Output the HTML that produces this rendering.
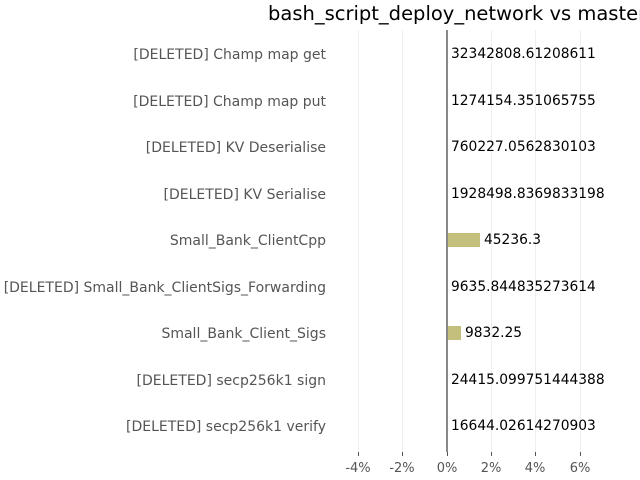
<!DOCTYPE html>
<html><head><style>
body{margin:0;width:640px;height:480px;background:#fff;overflow:hidden;position:relative;font-family:"DejaVu Sans","Liberation Sans",sans-serif}
.t{position:absolute;white-space:nowrap}
.l{right:314px;color:#555;font-size:14px;line-height:16px}
.v{color:#000;font-size:13.8px;line-height:16px}
.g{position:absolute;top:30px;height:422px;width:1px;background:#efefef}
.k{position:absolute;top:452px;height:4px;width:1px;background:#555}
.x{position:absolute;top:461px;color:#555;font-size:13px;width:40px;text-align:center}
.b{position:absolute;left:447px;height:14px;background:#c4bf7d}
</style></head><body>
<div class="t" style="left:268px;top:2px;font-size:19.5px;color:#000">bash_script_deploy_network vs master</div>
<div class="g" style="left:358px"></div><div class="g" style="left:402px"></div><div class="g" style="left:491px"></div><div class="g" style="left:535px"></div><div class="g" style="left:580px"></div>
<div class="k" style="left:358px"></div><div class="k" style="left:402px"></div><div class="k" style="left:447px"></div><div class="k" style="left:491px"></div><div class="k" style="left:535px"></div><div class="k" style="left:580px"></div>
<div class="x" style="left:338px">-4%</div><div class="x" style="left:382px">-2%</div><div class="x" style="left:427px">0%</div><div class="x" style="left:471px">2%</div><div class="x" style="left:515px">4%</div><div class="x" style="left:560px">6%</div>
<div class="b" style="top:233px;width:33px"></div>
<div class="b" style="top:326px;width:14px"></div>
<div style="position:absolute;left:446px;top:30px;width:2px;height:422px;background:#888"></div>
<div class="t l" style="top:47px">[DELETED] Champ map get</div>
<div class="t l" style="top:94px">[DELETED] Champ map put</div>
<div class="t l" style="top:140px">[DELETED] KV Deserialise</div>
<div class="t l" style="top:187px">[DELETED] KV Serialise</div>
<div class="t l" style="top:233px">Small_Bank_ClientCpp</div>
<div class="t l" style="top:280px">[DELETED] Small_Bank_ClientSigs_Forwarding</div>
<div class="t l" style="top:326px">Small_Bank_Client_Sigs</div>
<div class="t l" style="top:373px">[DELETED] secp256k1 sign</div>
<div class="t l" style="top:419px">[DELETED] secp256k1 verify</div>
<div class="t v" style="left:451px;top:46px">32342808.61208611</div>
<div class="t v" style="left:451px;top:93px">1274154.351065755</div>
<div class="t v" style="left:451px;top:139px">760227.0562830103</div>
<div class="t v" style="left:451px;top:186px">1928498.8369833198</div>
<div class="t v" style="left:484px;top:232px">45236.3</div>
<div class="t v" style="left:451px;top:279px">9635.844835273614</div>
<div class="t v" style="left:465px;top:325px">9832.25</div>
<div class="t v" style="left:451px;top:372px">24415.099751444388</div>
<div class="t v" style="left:451px;top:418px">16644.02614270903</div>
</body></html>
